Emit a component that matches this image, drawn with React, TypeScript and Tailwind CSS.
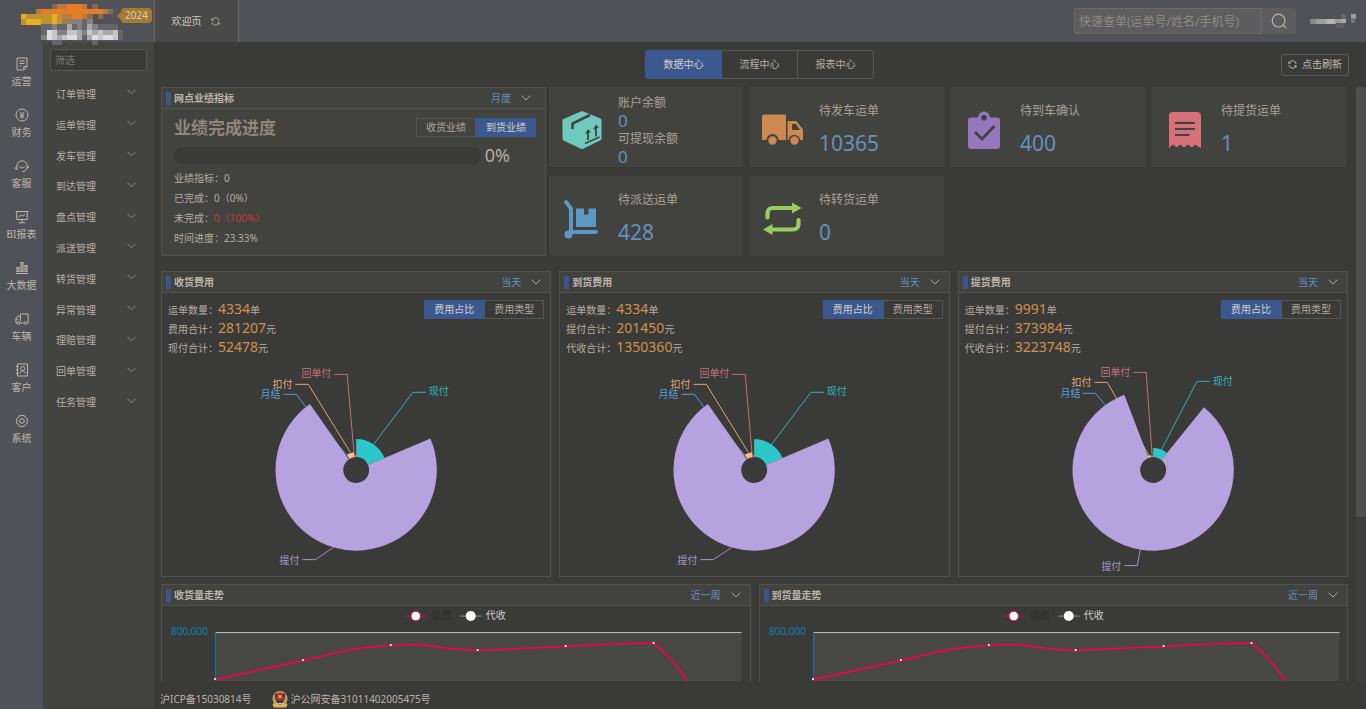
import type { ReactNode } from "react";

interface ISlice {
  name: string;
  color: string;
  from: number;
  to: number;
  radius: number;
  line: string;
  x: number;
  y: number;
  anchor: "start" | "end";
}

interface IFee {
  title: string;
  rows: { label: string; value: string; unit: string }[];
  slices: ISlice[];
}

const FONT = "font-['Noto_Sans','Noto_Sans_CJK_SC',sans-serif]";

const rail = [
  {
    name: "运营",
    icon: <path d="M2 1h10v8.5L8.8 13H2zM8.8 13V9.5H12M4.5 4h5M4.5 6.5h5M4.5 9h2" />,
  },
  {
    name: "财务",
    icon: (
      <>
        <circle cx="7" cy="7" r="6" />
        <path d="M4.8 3.8 7 6.6l2.2-2.8M7 6.6v4M4.8 7h4.4M4.8 8.9h4.4" />
      </>
    ),
  },
  {
    name: "客服",
    icon: <path d="M2.4 9.600A5.200 5.200 0 1 1 12 8.200c-.5 2.600-2.200 4.200-4.800 4.600M.8 8v2.200h2M4.400 7.400a2.900 2.900 0 0 0 5.200 0M11.800 8.800h1.400V6.600" />,
  },
  {
    name: "BI报表",
    icon: <path d="M.8 1.5h12.4M1.8 1.5v8h10.4v-8M7 9.5v3M3.8 12.8h6.4M4 7l2-2.2 1.6 1.4L10 4" />,
  },
  {
    name: "大数据",
    icon: <path d="M1 12.500h12M2 6.500h2v4H2zM6 1.500h2v9H6zM10 4.500h2v6h-2z" strokeWidth="1.200" />,
  },
  {
    name: "车辆",
    icon: (
      <>
        <path d="M5.2 10.8h3.2M2 10.8H.9V6.6l1.7-2.4h2.8M5.4 9V2h7.8v8.8h-1M1 7.2h2.4" />
        <circle cx="3.6" cy="11" r="1.4" />
        <circle cx="10.4" cy="11" r="1.4" />
      </>
    ),
  },
  {
    name: "客户",
    icon: (
      <>
        <path d="M2.5 1h10v12h-10zM1 3.5h2.5M1 7h2.5M1 10.5h2.5M5 10.6c.3-1.8 1.2-2.5 2.6-2.5s2.3.7 2.6 2.5" />
        <circle cx="7.6" cy="5.6" r="2" />
      </>
    ),
  },
  {
    name: "系统",
    icon: (
      <>
        <path d="M4.6 1.6h4.8l1 1.900 2.200 1.500-.8 2 .8 2-2.200 1.500-1 1.900H4.6l-1-1.900L1.400 9l.8-2-.8-2 2.200-1.500z" />
        <circle cx="7" cy="7" r="2.3" />
      </>
    ),
  },
];

const menus = [
  "订单管理",
  "运单管理",
  "发车管理",
  "到达管理",
  "盘点管理",
  "派送管理",
  "转货管理",
  "异常管理",
  "理赔管理",
  "回单管理",
  "任务管理",
];

const logoColors: Record<string, string> = {
  o: "#e57c26",
  p: "#bd7744",
  q: "#8b6a55",
  y: "#e3b020",
  z: "#bf922f",
  k: "#93804f",
  a: "#66666a",
  b: "#828285",
  c: "#a9a9ac",
  d: "#c6c6c9",
  e: "#dddddf",
  s: "#4a4a4b",
};

const logoRows = [
  "......qppooop.q.....",
  "...poooooooooooopq..",
  "yzzzzzyzppoopq.q....",
  "zyyyzzyzkkbbab......",
  "....aabaacabacbaaaa.",
  "....aedbbddcbdcdccda",
  "....bedcdeecacedeeda",
  "....s.aa.s..s.a.....",
];

const userRows = [
  { x: 0, y: 7, w: 6, c: "#88888b" },
  { x: 6, y: 7, w: 10, c: "#a09f9f" },
  { x: 16, y: 7, w: 9, c: "#b5b3b0" },
  { x: 25, y: 7, w: 6, c: "#99989a" },
  { x: 31, y: 6, w: 5, c: "#aaa9aa" },
  { x: 31, y: 2, w: 5, c: "#66666a" },
  { x: 26, y: 11, w: 8, c: "#5f5f64" },
  { x: 41, y: 2, w: 5, c: "#a19e9a" },
  { x: 41, y: 6, w: 4, c: "#77767a" },
];

const stats = [
  {
    label: "待发车运单",
    value: "10365",
    icon: (
      <g fill="#cc8a50">
        <path d="M2 5.500h21a1 1 0 0 1 1 1V31h-7.500a6 6 0 0 0-12 0H0V7.500a2 2 0 0 1 2-2z" />
        <path fillRule="evenodd" d="M25.500 12H34.500l6.500 8.500V31h-2.800a6 6 0 0 0-11.800 0h-.9zM30 15v6h8L34 15z" />
        <circle cx="10.500" cy="31.500" r="4.200" />
        <circle cx="32.500" cy="31.500" r="4.200" />
      </g>
    ),
  },
  {
    label: "待到车确认",
    value: "400",
    icon: (
      <>
        <path
          fill="#9577bd"
          fillRule="evenodd"
          d="M8 8.500h7a6 6 0 0 1 12 0h7a3 3 0 0 1 3 3V37a3 3 0 0 1-3 3H8a3 3 0 0 1-3-3V11.500a3 3 0 0 1 3-3zM21 6a2.800 2.800 0 1 0 0 5.600A2.800 2.800 0 0 0 21 6z"
        />
        <path d="m12 23 7 7 12.500-13" fill="none" stroke="#42423f" strokeWidth="2.800" />
      </>
    ),
  },
  {
    label: "待提货运单",
    value: "1",
    icon: (
      <>
        <path fill="#d6707b" d="M9 3h24a4 4 0 0 1 4 4v32l-3-1.500-2.500-2-3.800 3-3.800-3-3.900 3-3.800-3-3.700 3-3.300-3L5 39V7a4 4 0 0 1 4-4z" />
        <path d="M11 14h20M11 20h20M11 26h14.500" stroke="#42423f" strokeWidth="2.200" />
      </>
    ),
  },
  {
    label: "待派送运单",
    value: "428",
    icon: (
      <>
        <path d="m5 4 5 6.500v24M9 34h26" fill="none" stroke="#5b99c4" strokeWidth="4" strokeLinecap="round" strokeLinejoin="round" />
        <circle cx="7.500" cy="36.500" r="4" fill="#5b99c4" />
        <path d="M15 10.500h8v6h4.500v-6H35V29H15z" fill="#5b99c4" />
      </>
    ),
  },
  {
    label: "待转货运单",
    value: "0",
    icon: (
      <>
        <path d="M5.500 19.500v-4.500a5 5 0 0 1 5-5H31M36.500 22v4.500a5 5 0 0 1-5 5H10" fill="none" stroke="#9bcc62" strokeWidth="4.200" strokeLinecap="round" />
        <path d="m30 4.500 9.500 5.500-9.500 5.500zM10.500 26 1 31.500l9.500 5.500z" fill="#9bcc62" />
      </>
    ),
  },
];

const nearSlices: ISlice[] = [
  { name: "现付", color: "#2ec7c9", from: 0, to: 67, radius: 31, line: "17,-25 57,-78 70,-78", x: 73, y: -79, anchor: "start" },
  { name: "月结", color: "#5ab1ef", from: -35, to: -31, radius: 14, line: "-8,-13 -51,-64 -60,-76 -73,-76", x: -76, y: -76, anchor: "end" },
  { name: "扣付", color: "#ffb980", from: -31, to: -7, radius: 18, line: "-6,-18 -48,-86 -61,-86", x: -64, y: -86, anchor: "end" },
  { name: "回单付", color: "#d87a80", from: -7, to: 0, radius: 15, line: "-2,-15 -9,-96 -22,-96", x: -25, y: -97, anchor: "end" },
  { name: "提付", color: "#b6a2de", from: 67, to: 325, radius: 81, line: "-23,78 -41,90 -54,90", x: -57, y: 90, anchor: "end" },
];

const pickupSlices: ISlice[] = [
  { name: "现付", color: "#2ec7c9", from: 0, to: 39, radius: 22, line: "8,-20 44,-89 57,-89", x: 60, y: -89, anchor: "start" },
  { name: "月结", color: "#5ab1ef", from: -24, to: -21, radius: 14, line: "-5,-13 -48,-65 -58,-77 -71,-77", x: -73, y: -77, anchor: "end" },
  { name: "扣付", color: "#ffb980", from: -21, to: -8, radius: 15, line: "-4,-14 -46,-88 -59,-88", x: -62, y: -88, anchor: "end" },
  { name: "回单付", color: "#d87a80", from: -8, to: 0, radius: 14, line: "-1,-14 -7,-98 -20,-98", x: -23, y: -98, anchor: "end" },
  { name: "提付", color: "#b6a2de", from: 39, to: 339, radius: 81, line: "-13,80 -16,96 -29,96", x: -32, y: 96, anchor: "end" },
];

const fees: IFee[] = [
  {
    title: "收货费用",
    rows: [
      { label: "运单数量", value: "4334", unit: "单" },
      { label: "费用合计", value: "281207", unit: "元" },
      { label: "现付合计", value: "52478", unit: "元" },
    ],
    slices: nearSlices,
  },
  {
    title: "到货费用",
    rows: [
      { label: "运单数量", value: "4334", unit: "单" },
      { label: "提付合计", value: "201450", unit: "元" },
      { label: "代收合计", value: "1350360", unit: "元" },
    ],
    slices: nearSlices,
  },
  {
    title: "提货费用",
    rows: [
      { label: "运单数量", value: "9991", unit: "单" },
      { label: "提付合计", value: "373984", unit: "元" },
      { label: "代收合计", value: "3223748", unit: "元" },
    ],
    slices: pickupSlices,
  },
];

function Chevron({ className }: { className?: string }) {
  return (
    <svg viewBox="0 0 10 6" className={className} fill="none" stroke="currentColor" aria-hidden="true">
      <path d="m.7.7 4.300 4.300L9.300.7" />
    </svg>
  );
}

function RefreshIcon() {
  return (
    <svg viewBox="0 0 10 10" className="w-[9px] h-[9px]" fill="none" stroke="currentColor" aria-hidden="true">
      <path d="M1 4.200V1.500M1 3.500h2.200M1.200 3.300A4 4 0 0 1 8.900 4.400M9 5.800v2.700M9 6.500H6.800M8.800 6.700A4 4 0 0 1 1.100 5.600" />
    </svg>
  );
}

// 带标题栏的面板
function Panel({ title, range, children, className }: { title: string; range: string; children: ReactNode; className?: string }) {
  return (
    <section className={`border border-[#51514e] ${className ?? "[&_.range]:mr-[9px]"}`}>
      <div className="flex items-center h-[21px] pl-1 bg-[#42423f] border-b border-[#51514e]">
        <div className="w-[5px] h-[13px] bg-[#3a5688]" />
        <h2 className="ml-[3px] flex-1 text-[10px] font-bold text-[#bdb6ab]">{title}</h2>
        <div className="range relative flex items-center">
          <select aria-label={title} className="appearance-none bg-transparent pr-5 text-[10px] leading-4 text-[#6490bd] outline-none">
            <option>{range}</option>
          </select>
          <Chevron className="absolute right-0 w-[10px] h-[6px] pointer-events-none text-[#b0a99d]" />
        </div>
      </div>
      {children}
    </section>
  );
}

function Toggle({ items, active }: { items: string[]; active: number }) {
  return (
    <div className="flex h-[19px]">
      {items.map((item, i) => (
        <button
          key={item}
          type="button"
          aria-pressed={i === active}
          className={`w-[60px] text-[10px] border ${
            i === active ? "bg-[#3b598f] border-[#3b598f] text-[#d5d0c8]" : "border-[#555552] text-[#b0a99d]"
          }`}
        >
          {item}
        </button>
      ))}
    </div>
  );
}

function arc(from: number, to: number, r: number) {
  const inner = 13;
  const point = (deg: number, radius: number) => {
    const rad = (deg * Math.PI) / 180;
    return `${(Math.sin(rad) * radius).toFixed(2)} ${(-Math.cos(rad) * radius).toFixed(2)}`;
  };
  const large = to - from > 180 ? 1 : 0;
  return `M${point(from, inner)}L${point(from, r)}A${r} ${r} 0 ${large} 1 ${point(to, r)}L${point(to, inner)}A${inner} ${inner} 0 ${large} 0 ${point(from, inner)}Z`;
}

function RosePie({ slices }: { slices: ISlice[] }) {
  return (
    <svg viewBox="-195 -113 390 219" className="block w-full h-[219px]">
      {slices.map((s) => (
        <polyline key={s.name} points={s.line} fill="none" stroke={s.color} strokeOpacity="0.85" />
      ))}
      {slices.map((s) => (
        <path key={s.name} d={arc(s.from, s.to, s.radius)} fill={s.color} />
      ))}
      {slices.map((s) => (
        <text key={s.name} x={s.x} y={s.y + 4} textAnchor={s.anchor} fill={s.color} fillOpacity="0.9" fontSize="10">
          {s.name}
        </text>
      ))}
    </svg>
  );
}

function FeePanel({ fee }: { fee: IFee }) {
  return (
    <Panel title={fee.title} range="当天">
      <div className="flex justify-between items-start h-[64px] px-[6px]">
        <div className="pt-[6px] text-[10px] text-[#b5aea2]">
          {fee.rows.map((row) => (
            <div key={row.label} className="flex items-baseline h-[19px] leading-[19px]">
              <span>{row.label}：</span>
              <span className="text-sm leading-[19px] text-[#d1914b]">{row.value}</span>
              <span>{row.unit}</span>
            </div>
          ))}
        </div>
        <div className="pt-[7px]">
          <Toggle items={["费用占比", "费用类型"]} active={0} />
        </div>
      </div>
      <RosePie slices={fee.slices} />
    </Panel>
  );
}

function TrendPanel({ title }: { title: string }) {
  const dots = [
    [53, 73],
    [141, 54],
    [229, 39],
    [316, 44],
    [404, 40],
    [492, 37],
  ];
  return (
    <Panel title={title} range="近一周">
      <svg viewBox="0 0 588 180" className="block w-full h-[180px]">
        <path d="M243 10h22" stroke="#a81a4a" />
        <circle cx="254" cy="10" r="4.800" fill="#fff" stroke="#f00056" />
        <text x="270" y="13" fontSize="10" fill="#2f2f2d">运费</text>
        <path d="M298 10h22" stroke="#8a8a87" />
        <circle cx="309" cy="10" r="5" fill="#fff" />
        <text x="324" y="13" fontSize="10" fill="#d0d0cc">代收</text>
        <rect x="53" y="26" width="527" height="154" fill="#484846" />
        <path d="M53 26.500h527" stroke="#c4c4c1" />
        <path d="M53.500 26v154" stroke="#0a78b0" />
        <text x="46" y="29" fontSize="10" textAnchor="end" fill="#0d7fb9">800,000</text>
        <path
          d="M53 73.500C82 67 112 61 141 54.500C171 48 189 41 229 39.500C271 36 274 44 316 44C349 44 374 41 404 40.500C439 38 464 37 492 37C508 50 518 63 526 75C547 109 564 145 579 180"
          fill="none"
          stroke="#ee0055"
          strokeWidth="1.800"
        />
        {dots.map(([x, y]) => (
          <circle key={x} cx={x} cy={y} r="1.100" fill="#fff" />
        ))}
      </svg>
    </Panel>
  );
}

function BoxIcon() {
  return (
    <>
      <path fill="#6fc9bf" d="M21 2 39.500 9.500a2 2 0 0 1 1 1.700v18.300a2 2 0 0 1-1 1.700L22 39.700a2 2 0 0 1-2 0L2.500 31.500a2 2 0 0 1-1-1.700V11.500A2 2 0 0 1 2.600 10z" />
      <path d="M11.500 20v-5.500L29 6" fill="none" stroke="#42423f" strokeWidth="2.600" />
      <path d="M24 34.500 38.500 28" stroke="#42423f" strokeWidth="1.400" />
      <path d="M27 31v-8.500M35 27.500V18" stroke="#42423f" strokeWidth="1.800" />
      <path d="m24 25 3-5 2.800 3.200zM32 20.500l3-5 2.800 3.200z" fill="#42423f" />
    </>
  );
}

function StatIcon({ children }: { children: ReactNode }) {
  return (
    <svg viewBox="0 0 42 42" className="w-[42px] h-[42px] shrink-0" aria-hidden="true">
      {children}
    </svg>
  );
}

function Header() {
  return (
    <header className="flex h-[42px] shrink-0 bg-[#515257]">
      <div className="relative flex w-[154px] items-start justify-end pt-[8px] pr-[2px]">
        <svg viewBox="0 0 102 41" className="absolute left-[21px] top-[4px] w-[102px] h-[41px] z-10" shapeRendering="crispEdges" aria-hidden="true">
          {logoRows.map((row, r) =>
            row.split("").map((cell, c) =>
              cell === "." ? null : <rect key={`${r}-${c}`} x={c * 5.1} y={r * 5.1} width="5.200" height="5.200" fill={logoColors[cell]} />
            )
          )}
        </svg>
        <div className="relative z-20 flex items-center">
          <svg viewBox="0 0 4 8" className="w-1 h-2" aria-hidden="true">
            <path d="M4 0v8L0 4z" fill="#a67a30" />
          </svg>
          <span className="w-[31px] h-[15px] rounded-sm bg-[#a67a30] text-center text-[10px] leading-[15px] text-[#d5cfc2]">2024</span>
        </div>
      </div>
      <div className="flex items-center justify-center gap-[9px] w-[85px] pr-[2px] bg-[#484948] border-x border-[#6c675f] text-[10px] text-[#cdc8be]">
        <span>欢迎页</span>
        <button type="button" aria-label="刷新" className="text-[#b5aea2]">
          <RefreshIcon />
        </button>
      </div>
      <div className="flex flex-1 items-center justify-end pr-[10px]">
        <form className="flex h-[26px] w-[222px] rounded-[3px] bg-[#5d5d60] overflow-hidden">
          <input
            aria-label="快速查单"
            placeholder="快速查单(运单号/姓名/手机号)"
            className="w-[188px] h-full px-1 bg-transparent border border-[#6e6a62] rounded-l-[3px] text-xs text-[#c5bfb3] placeholder:text-[#8f8b84] outline-none"
          />
          <button type="button" aria-label="搜索" className="flex flex-1 items-center justify-center text-[#bdb6ab]">
            <svg viewBox="0 0 16 16" className="w-4 h-4" fill="none" stroke="currentColor" strokeWidth="1.200" aria-hidden="true">
              <circle cx="7.600" cy="7.600" r="6.400" />
              <path d="m12.200 12.200 3 3" />
            </svg>
          </button>
        </form>
        <svg viewBox="0 0 46 18" className="ml-[14px] w-[46px] h-[18px]" shapeRendering="crispEdges" aria-hidden="true">
          {userRows.map((r, i) => (
            <rect key={i} x={r.x} y={r.y} width={r.w} height="5" fill={r.c} />
          ))}
        </svg>
      </div>
    </header>
  );
}

function Sidebar() {
  return (
    <aside className="flex w-[154px] shrink-0">
      <nav className="w-[43px] pt-[15px] bg-[#515257]">
        {rail.map((item) => (
          <a key={item.name} href="#" className="flex flex-col items-center gap-[3px] h-[51px] text-[10px] leading-[14px] text-[#beb7ab]">
            <svg viewBox="0 0 14 14" className="w-[14px] h-[14px]" fill="none" stroke="currentColor" aria-hidden="true">
              {item.icon}
            </svg>
            <span className="whitespace-nowrap">{item.name}</span>
          </a>
        ))}
      </nav>
      <div className="flex-1 px-[7px] pt-[7px] bg-[#434340]">
        <input
          aria-label="筛选"
          placeholder="筛选"
          className="block w-full h-[22px] px-1 rounded-[3px] bg-[#3a3a38] border border-[#575754] text-[10px] placeholder:text-[#77746e] outline-none"
        />
        <ul className="grid grid-rows-11 h-[339px] mt-2">
          {menus.map((menu) => (
            <li key={menu} className="flex">
              <button type="button" className="flex flex-1 items-center justify-between pl-[6px] pr-[11px] text-[10px] text-[#b8b1a5]">
                {menu}
                <Chevron className="w-[9px] h-[6px] mb-1 text-[#99938a]" />
              </button>
            </li>
          ))}
        </ul>
      </div>
    </aside>
  );
}

function Performance() {
  return (
    <Panel title="网点业绩指标" range="月度" className="bg-[#42423f] [&_.range]:mr-[14px]">
      <div className="pt-[9px] pl-3 pr-[9px] text-[10px] text-[#b5aea2]">
        <div className="flex items-center justify-between">
          <h3 className="text-[17px] leading-[19px] font-bold text-[#8f877b]">业绩完成进度</h3>
          <Toggle items={["收货业绩", "到货业绩"]} active={1} />
        </div>
        <div className="flex items-center gap-1 mt-[7px] pr-[26px]">
          <div role="progressbar" aria-label="业绩完成进度" aria-valuenow={0} className="flex-1 h-[17px] rounded-full bg-[#3a3a38]" />
          <span className="text-lg leading-[22px]">0%</span>
        </div>
        <div className="mt-[2px] leading-5">
          <p>业绩指标：0</p>
          <p>已完成：0（0%）</p>
          <p>
            未完成：<span className="text-[#bf3f3b]">0（100%）</span>
          </p>
          <p>时间进度：23.33%</p>
        </div>
      </div>
    </Panel>
  );
}

function StatCards() {
  return (
    <div className="grid grid-cols-4 grid-rows-2 gap-x-[7px] gap-y-[9px] pr-[2px]">
      <div className="flex items-center gap-[15px] pl-3 pt-[6px] bg-[#42423f]">
        <StatIcon>
          <BoxIcon />
        </StatIcon>
        <dl className="text-xs leading-[18px] text-[#a9a297]">
          <dt>账户余额</dt>
          <dd className="text-[17px] text-[#6690bd]">0</dd>
          <dt>可提现余额</dt>
          <dd className="text-[17px] text-[#6690bd]">0</dd>
        </dl>
      </div>
      {stats.map((stat) => (
        <div key={stat.label} className="flex items-center gap-[15px] pl-3 pt-[6px] bg-[#42423f]">
          <StatIcon>{stat.icon}</StatIcon>
          <dl className="text-[#a9a297]">
            <dt className="text-xs leading-[18px]">{stat.label}</dt>
            <dd className="mt-2 text-[21px] leading-[30px] text-[#6690bd]">{stat.value}</dd>
          </dl>
        </div>
      ))}
    </div>
  );
}

export default function App() {
  return (
    <div className={`flex flex-col h-screen overflow-hidden bg-[#3a3a38] ${FONT}`}>
      <Header />
      <div className="flex flex-1 min-h-0">
        <Sidebar />
        <main className="flex flex-1 flex-col min-w-0">
          <div className="grid grid-cols-[1fr_auto_1fr] items-center h-[45px] shrink-0 pr-[17px]">
            <div className="col-start-2 flex h-[29px] pl-4 text-[10px] text-[#b5aea2]">
              <button type="button" aria-pressed="true" className="w-[77px] rounded-l-[3px] bg-[#3b598f] border border-[#3b598f] text-[#d5d0c8]">
                数据中心
              </button>
              <button type="button" aria-pressed="false" className="w-[76px] border-y border-r border-[#575754]">
                流程中心
              </button>
              <button type="button" aria-pressed="false" className="w-[76px] border-y border-r border-[#575754] rounded-r-[3px]">
                报表中心
              </button>
            </div>
            <button type="button" className="justify-self-end flex items-center justify-center gap-[5px] w-[68px] h-[22px] rounded-[3px] border border-[#5b5b58] text-[10px] text-[#c0b9ae]">
              <RefreshIcon />
              点击刷新
            </button>
          </div>
          <div className="flex flex-1 min-h-0">
            <div className="flex-1 min-w-0 pl-[7px] pr-2 overflow-hidden">
              <div className="grid grid-cols-[385px_1fr] gap-[3px] h-[169px]">
                <Performance />
                <StatCards />
              </div>
              <div className="grid grid-cols-3 gap-2 mt-[15px]">
                {fees.map((fee) => (
                  <FeePanel key={fee.title} fee={fee} />
                ))}
              </div>
              <div className="grid grid-cols-2 gap-2 mt-[7px]">
                <TrendPanel title="收货量走势" />
                <TrendPanel title="到货量走势" />
              </div>
            </div>
            <div className="w-[10px] bg-[#3f3f3d]">
              <div className="h-[430px] rounded-[3px] bg-[#50504e]" />
            </div>
          </div>
          <footer className="flex items-center gap-5 h-[28px] shrink-0 pl-[6px] text-[10px] pt-[8px] text-[#bab3a8]">
            <a href="#">沪ICP备15030814号</a>
            <a href="#" className="flex items-center gap-[3px]">
              <svg viewBox="0 0 16 17" className="w-4 h-[17px]" aria-hidden="true">
                <path d="M2.500 11h11l2 3-1.500 2.500H2L.5 14z" fill="#dcb25a" />
                <path d="M8 0C12 0 15 3 15.500 7c.3 3-1.500 6-3.500 7H4C2 13 .2 10 .5 7 1 3 4 0 8 0z" fill="#c9a052" />
                <path d="M8 1.500c2 1 3.500 1 5 1C13.500 8 12 11.500 8 13.500 4 11.500 2.500 8 3 2.500c1.500 0 3 0 5-1z" fill="#28356f" />
                <circle cx="8" cy="6" r="3.800" fill="#d42a22" />
                <path d="m8 3.200.6 1.500h1.600L9 5.700l.5 1.600L8 6.400l-1.500.9.500-1.600-1.200-1h1.600z" fill="#efc54c" />
                <path d="M3.500 14c1.500-2 7.500-2 9 0" fill="none" stroke="#f0d48a" />
              </svg>
              沪公网安备31011402005475号
            </a>
          </footer>
        </main>
      </div>
    </div>
  );
}
